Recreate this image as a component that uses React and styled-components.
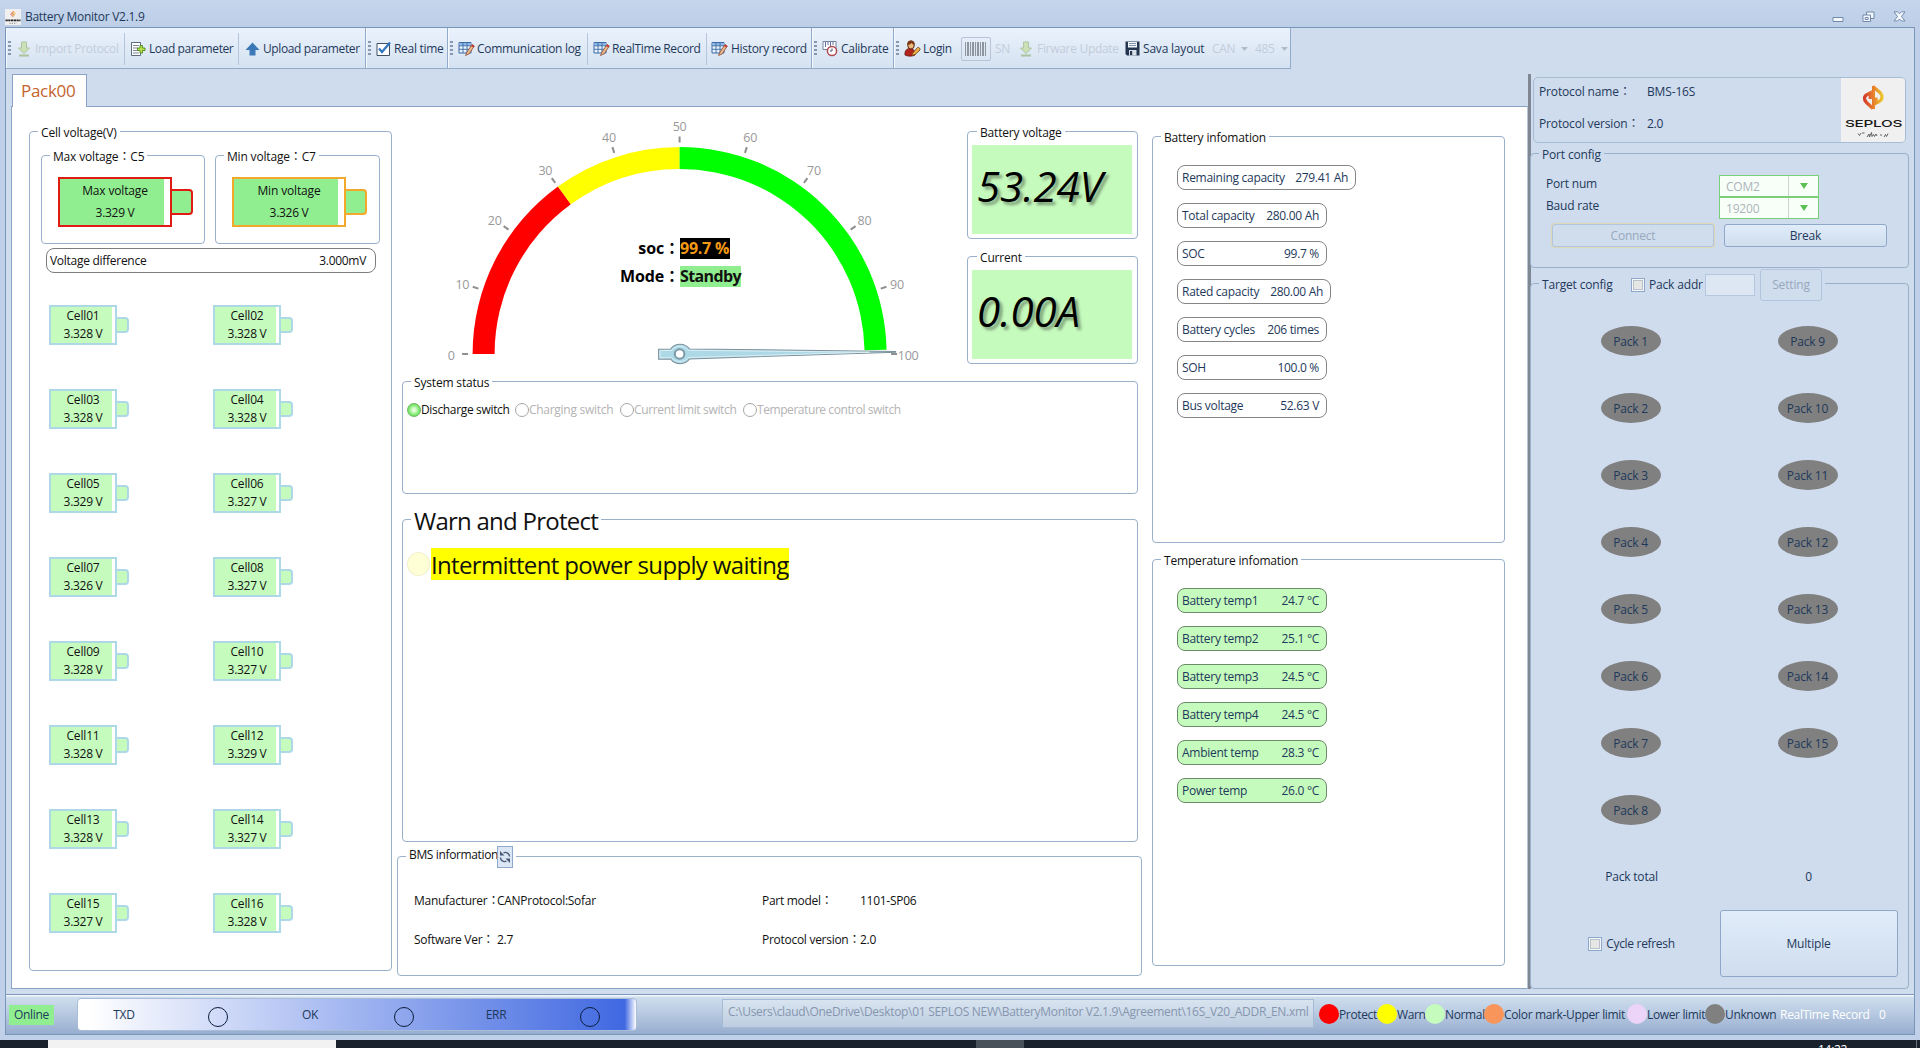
import React from 'react';
import styled, { createGlobalStyle } from 'styled-components';

const NAVY = '#1e395b';
const LINE = '#9ab0cb';
const PALE = '#c6fbbe';

const GlobalStyle = createGlobalStyle`
  *, *::before, *::after { box-sizing: border-box; }
  body {
    margin: 0;
    background: #fff;
    overflow: hidden;
    font-family: "Open Sans", "Noto Sans CJK TC", sans-serif;
    font-size: 12px;
    line-height: 16px;
    letter-spacing: -0.28px;
    color: #111;
    white-space: nowrap;
  }
`;

/* ---------- shell ---------- */

const Page = styled.div`
  width: 1926px;
  height: 1048px;
  display: flex;
  flex-direction: column;
  overflow: hidden;
  background: #fff;
`;

const Window = styled.div`
  width: 1920px;
  height: 1040px;
  display: flex;
  flex-direction: column;
  background: #bfd0e8;
  color: ${NAVY};
`;

const TitleBar = styled.header`
  height: 27px;
  flex: none;
  display: flex;
  align-items: center;
  padding: 6px 14px 0 5px;
  background: linear-gradient(#c4d5ec, #bdcfe7);
`;

const AppIcon = styled.svg`
  width: 16px;
  height: 16px;
  margin-right: 4px;
`;

const Title = styled.span`
  flex: 1;
`;

const WindowButtons = styled.div`
  display: flex;
  align-items: center;
  gap: 18px;
`;

const Body = styled.div`
  flex: 1;
  margin: 0 5px 5px;
  border: 1px solid #7a95ba;
  background: #cfdced;
  display: flex;
  flex-direction: column;
  min-height: 0;
`;

/* ---------- toolbar ---------- */

const ToolStrip = styled.nav`
  display: flex;
  height: 41px;
  flex: none;
`;

const ToolGroup = styled.div`
  width: ${(p) => p.$w}px;
  padding-top: 1px;
  display: flex;
  align-items: center;
  background: linear-gradient(#eaf2fc, #d5e2f1);
  border-right: 1px solid #93abcb;
  border-bottom: 1px solid #93abcb;
  box-shadow: inset 1px 0 0 #f5f9fe;
`;

const Grip = styled.span`
  width: 3px;
  height: 15px;
  margin: 0 ${(p) => p.$gap}px 0 2px;
  background: repeating-linear-gradient(#8797ad 0 2px, transparent 2px 4px);
`;

const Tool = styled.span`
  display: flex;
  align-items: center;
  width: ${(p) => p.$w}px;
  gap: ${(p) => p.$gap || 3}px;
  opacity: ${(p) => (p.$off ? 0.45 : 1)};
  color: ${(p) => (p.$off ? '#a0aab8' : NAVY)};
  letter-spacing: ${(p) => p.$ls || -0.3}px;
  svg { flex: none; }
`;

const ToolSep = styled.span`
  width: 1px;
  height: 32px;
  margin-right: ${(p) => p.$gap}px;
  background: #b4c5db;
`;

const BarcodeButton = styled.span`
  width: 30px;
  height: 24px;
  margin-right: 4px;
  display: flex;
  align-items: center;
  justify-content: center;
  border: 1px solid #b9c3d3;
  border-radius: 2px;
`;

const Bars = styled.span`
  width: 22px;
  height: 14px;
  background: repeating-linear-gradient(90deg, #8e959f 0 1px, transparent 1px 2px, #8e959f 2px 4px, transparent 4px 5px);
`;

/* ---------- main layout ---------- */

const Main = styled.main`
  flex: 1;
  display: flex;
  padding: 5px 0 5px 5px;
  min-height: 0;
`;

const Workspace = styled.section`
  width: 1517px;
  display: flex;
  flex-direction: column;
`;

const Tab = styled.div`
  width: 75px;
  height: 33px;
  margin: 0 0 -1px 1px;
  display: flex;
  align-items: center;
  padding-left: 8px;
  z-index: 1;
  border: 1px solid #8aa3c4;
  border-bottom: 0;
  background: #fff;
  color: #c4642d;
  font-size: 17px;
  letter-spacing: -0.3px;
`;

const TabPanel = styled.div`
  flex: 1;
  display: flex;
  align-items: flex-start;
  border: 1px solid #8aa3c4;
  border-right-color: #b9c6d8;
  background: #fff;
  color: #111;
`;

const Splitter = styled.div`
  width: 3px;
  background: #7f8792;
`;

const Group = styled.section`
  width: ${(p) => p.$w}px;
  height: ${(p) => p.$h}px;
  margin: ${(p) => p.$m || 0};
  padding: ${(p) => p.$p || 0};
  flex: none;
  display: flex;
  flex-direction: column;
  border: 1px solid ${LINE};
  border-radius: 4px;
`;

const Legend = styled.div`
  align-self: flex-start;
  flex: none;
  height: ${(p) => p.$h || 16}px;
  margin-top: calc(${(p) => (p.$h || 16) / -2}px + ${(p) => p.$dy ?? 1}px);
  margin-bottom: calc(${(p) => (p.$h || 16) / -2}px - ${(p) => p.$dy ?? 1}px);
  margin-left: ${(p) => p.$x || 8}px;
  padding: 0 3px;
  display: flex;
  align-items: center;
  background: ${(p) => p.$bg || '#fff'};
  font-size: ${(p) => p.$size || 12}px;
  letter-spacing: ${(p) => p.$ls || -0.17}px;
`;

/* ---------- cells ---------- */

const Extremes = styled.div`
  flex: none;
  display: flex;
  gap: 10px;
  padding: 23px 0 0 11px;
`;

const CellShape = styled.div`
  display: flex;
  align-items: center;
`;

const CellSlot = styled.div`
  padding: 21px 0 0 16px;
`;

const CellCase = styled.div`
  width: ${(p) => (p.$big ? 114 : 68)}px;
  height: ${(p) => (p.$big ? 50 : 40)}px;
  padding-right: ${(p) => (p.$big ? 6 : 3)}px;
  border: 2px solid ${(p) => p.$edge};
  background: #fff;
`;

const CellFill = styled.div`
  height: 100%;
  padding-left: ${(p) => (p.$big ? 6 : 3)}px;
  display: flex;
  flex-direction: column;
  align-items: center;
  justify-content: center;
  background: ${(p) => (p.$big ? '#90ee90' : PALE)};
  line-height: ${(p) => (p.$big ? 22.5 : 18)}px;
  letter-spacing: -0.15px;
`;

const Nub = styled.div`
  width: ${(p) => (p.$big ? 22 : 13)}px;
  height: ${(p) => (p.$big ? 26 : 16)}px;
  margin-left: -1px;
  border: 2px solid ${(p) => p.$edge};
  border-left-width: 1px;
  border-radius: 0 4px 4px 0;
  background: ${(p) => (p.$big ? '#90ee90' : PALE)};
`;

const Num = styled.span`
  letter-spacing: -0.3px;
`;

const Difference = styled.div`
  flex: none;
  width: 330px;
  height: 25px;
  margin: 4px 0 0 16px;
  padding: 0 9px 0 3px;
  display: flex;
  align-items: center;
  justify-content: space-between;
  border: 1px solid #7d7d7d;
  border-radius: 8px;
`;

const CellGrid = styled.div`
  display: grid;
  grid-template-columns: 164px 164px;
  grid-template-rows: repeat(7, 84px) 40px;
  padding: 32px 0 0 19px;
`;

const CellTile = styled.div`
  height: 40px;
`;

/* ---------- centre column ---------- */

const Centre = styled.div`
  width: 745px;
  margin-left: 5px;
  display: flex;
  flex-direction: column;
`;

const TopRow = styled.div`
  height: 274px;
  margin-left: 5px;
  display: flex;
`;

const GaugeBox = styled.div`
  position: relative;
  width: 565px;
  height: 274px;
`;

const GaugeText = styled.div`
  position: absolute;
  left: 178px;
  top: 131px;
  display: grid;
  grid-template-columns: 100px auto;
  grid-auto-rows: 21px;
  row-gap: 7px;
  line-height: 21px;
  font-size: 16px;
  font-weight: 700;
  letter-spacing: -0.1px;
  color: #000;
`;

const GaugeLabel = styled.span`
  text-align: right;
`;

const GaugeValue = styled.span`
  justify-self: start;
  width: ${(p) => p.$w}px;
  background: ${(p) => p.$bg};
  color: ${(p) => p.$fg};
  letter-spacing: ${(p) => p.$ls}px;
`;

const Readings = styled.div`
  display: flex;
  flex-direction: column;
  gap: 17px;
  padding-top: 24px;
`;

const LcdSlot = styled.div`
  padding-top: 13px;
`;

const Lcd = styled.div`
  height: 89px;
  padding-left: 5px;
  background: ${PALE};
  color: #000;
  font-size: 42px;
  font-style: italic;
  line-height: 82px;
  letter-spacing: -0.1px;
  text-shadow: 3px 3px 3px rgba(0, 0, 0, 0.38);
`;

const Switches = styled.div`
  display: flex;
  height: 20px;
  margin: 18px 0 0 4px;
`;

const Switch = styled.div`
  display: flex;
  align-items: center;
  width: ${(p) => p.$w}px;
  color: ${(p) => (p.$on ? '#111' : '#b3b3b3')};
  letter-spacing: ${(p) => p.$ls || -0.34}px;
`;

const Lamp = styled.span`
  width: 14px;
  height: 14px;
  flex: none;
  border-radius: 50%;
  border: 1px solid ${(p) => (p.$on ? '#6fb865' : '#a6a6a6')};
  background: ${(p) => (p.$on ? 'radial-gradient(#e2ffd9 0 15%, #5fe04f 75%)' : '#fff')};
`;

const Warning = styled.div`
  display: flex;
  height: 32px;
  margin: 28px 0 0 4px;
  align-items: flex-start;
`;

const WarnLamp = styled.span`
  width: 23px;
  height: 24px;
  margin: 4px 1px 0 0;
  border-radius: 50%;
  border: 1px solid #f1efcf;
  background: #ffffd6;
`;

const WarnText = styled.span`
  width: 358px;
  height: 32px;
  line-height: 34px;
  background: #ff0;
  font-size: 24px;
  letter-spacing: -0.65px;
`;

const RefreshButton = styled.span`
  width: 16px;
  height: 22px;
  display: flex;
  align-items: center;
  justify-content: center;
  border: 1px solid #8fa8c9;
  background: #dbe7f5;
`;

const LegendLabel = styled.span`
  width: 88px;
  padding-bottom: 4px;
`;

const InfoGrid = styled.div`
  display: grid;
  grid-template-columns: 83px 265px 98px auto;
  grid-auto-rows: 39px;
  align-items: center;
  padding: 24px 0 0 16px;
`;

/* ---------- info column ---------- */

const InfoColumn = styled.div`
  margin: 29px 0 0 10px;
  display: flex;
  flex-direction: column;
  gap: 16px;
`;

const PillList = styled.div`
  display: flex;
  flex-direction: column;
  align-items: flex-start;
  gap: 13px;
  padding: 28px 0 0 24px;
`;

const Pill = styled.div`
  width: ${(p) => p.$w || 150}px;
  height: 25px;
  padding: 0 7px 0 4px;
  display: flex;
  align-items: center;
  justify-content: space-between;
  border: 1px solid ${(p) => (p.$green ? '#6c8a69' : '#858585')};
  border-radius: 8px;
  background: ${(p) => (p.$green ? PALE : '#fff')};
  color: ${NAVY};
`;

/* ---------- side panel ---------- */

const Side = styled.aside`
  flex: 1;
  display: flex;
  flex-direction: column;
  color: ${NAVY};
  letter-spacing: -0.2px;
`;

const ProtocolCard = styled.div`
  width: 373px;
  height: 66px;
  margin: 3px 0 0 2px;
  display: flex;
  justify-content: space-between;
  border: 1px solid #a9bcd5;
  border-radius: 5px;
  overflow: hidden;
`;

const ProtocolRows = styled.div`
  display: grid;
  grid-template-columns: 108px auto;
  grid-auto-rows: 32px;
  align-items: center;
  padding-left: 5px;
  margin-top: -2px;
  letter-spacing: -0.15px;
`;

const PortRow = styled.div`
  height: 22px;
  display: flex;
`;

const PortLabel = styled.span`
  width: 188px;
  padding: 1px 0 0 15px;
`;

const Combo = styled.span`
  width: 100px;
  display: flex;
  border: 1px solid #7bcf76;
  background: #f8fff8;
  color: #acb3ba;
`;

const ComboText = styled.span`
  flex: 1;
  padding-left: 6px;
  line-height: 21px;
`;

const ComboArrow = styled.span`
  width: 30px;
  display: flex;
  align-items: center;
  justify-content: center;
  border-left: 1px solid #c9d5cf;
  &::after {
    content: "";
    border: 4px solid transparent;
    border-top: 6px solid #5cbf52;
    border-bottom: 0;
  }
`;

const PortButtons = styled.div`
  display: flex;
  gap: 10px;
  padding: 5px 0 0 21px;
`;

const Button = styled.span`
  width: ${(p) => p.$w}px;
  height: ${(p) => p.$h}px;
  display: flex;
  align-items: center;
  justify-content: center;
  border: 1px solid ${(p) => (p.$off ? '#b3c5de' : '#8fa8c9')};
  border-radius: 3px;
  background: ${(p) => (p.$off ? '#cfdded' : 'linear-gradient(#e0ecf9, #cfddee)')};
  color: ${(p) => (p.$off ? '#98a8bd' : NAVY)};
  box-shadow: ${(p) => (p.$glow ? '0 0 1px 1px #ddd8b4' : 'none')};
`;

const Check = styled.span`
  width: 14px;
  height: 14px;
  flex: none;
  margin-right: 4px;
  border: 1px solid #8fa8c9;
  background: #e6e6e4;
  box-shadow: inset 0 0 0 1px #f4f7fa, inset 0 0 0 2px #b9c2cc;
`;

const AddrLabel = styled.span`
  width: 52px;
`;

const AddrInput = styled.span`
  width: 50px;
  height: 22px;
  margin: 0 5px 0 4px;
  border: 1px solid #b5c6de;
  background: #dde6f3;
`;

const PackGrid = styled.div`
  display: grid;
  grid-template-columns: 177px 177px;
  grid-template-rows: repeat(8, 67px);
  grid-auto-flow: column;
  place-items: center;
  padding: 23px 0 0 11px;
`;

const PackBadge = styled.span`
  width: 60px;
  height: 30px;
  border-radius: 50%;
  background: #808080;
  text-align: center;
  line-height: 31px;
`;

const SideRow = styled.div`
  height: 67px;
  display: grid;
  grid-template-columns: 177px 177px;
  place-items: center;
  padding-left: 12px;
`;

const CheckLine = styled.span`
  display: flex;
  align-items: center;
  letter-spacing: -0.32px;
`;

const TargetTitle = styled.span`
  width: 89px;
`;

/* ---------- status bar ---------- */

const StatusBar = styled.footer`
  height: 40px;
  flex: none;
  display: flex;
  align-items: center;
  border-top: 1px solid #7f99bd;
  background: linear-gradient(#f0f6fb 0 1px, #cfdeed 2px, #b9cbe2 45%, #97adcf);
`;

const Online = styled.span`
  width: 45px;
  height: 20px;
  margin: 0 23px 0 3px;
  line-height: 20px;
  text-align: center;
  background: #90ee90;
`;

const Traffic = styled.div`
  width: 560px;
  height: 33px;
  display: grid;
  grid-template-columns: 92px 94px 92px 94px 92px 94px;
  align-items: center;
  border: 1px solid #a9bdd8;
  border-radius: 4px;
  background: linear-gradient(90deg, #fff 2%, #4169e1 97.5%, #4169e1 98%, #fff 100%);
  text-align: center;
`;

const Ring = styled.span`
  width: 20px;
  height: 20px;
  margin: 5px 0 0 38px;
  border: 1px solid #0b1d3c;
  border-radius: 50%;
`;

const PathBox = styled.div`
  width: 592px;
  height: 29px;
  margin: -2px 5px 0 85px;
  padding: 4px 0 0 5px;
  border: 1px solid #a6bad3;
  background: linear-gradient(#d8e4ef, #becde1);
  color: #8696ae;
  letter-spacing: -0.3px;
`;

const Key = styled.span`
  width: ${(p) => p.$w}px;
  display: flex;
  align-items: center;
  letter-spacing: -0.35px;
`;

const Dot = styled.span`
  width: 20px;
  height: 20px;
  flex: none;
  margin-top: -2px;
  border-radius: 50%;
  background: ${(p) => p.$c};
`;

const Counter = styled.span`
  width: ${(p) => p.$w}px;
  margin-left: 5px;
  color: #fff;
`;

const Taskbar = styled.div`
  width: 1920px;
  height: 8px;
  flex: none;
  display: flex;
  overflow: hidden;
  background: #18212c;
`;

const TaskItem = styled.span`
  width: ${(p) => p.$w}px;
  margin-left: ${(p) => p.$x}px;
  background: ${(p) => p.$c};
`;

const Clock = styled.span`
  width: 98px;
  margin-left: 794px;
  padding-top: 2px;
  color: #fff;
`;

const ShowDesktop = styled.span`
  border-left: 1px solid #6a727c;
`;

/* ---------- icons ---------- */

const DownloadIcon = () => (
  <svg width="12" height="16" viewBox="0 0 12 16">
    <path d="M3.5 1h5v6h3L6 12.5.5 7h3z" fill="#b3d46a" stroke="#6f9a35" />
    <path d="M1 14.5h10" stroke="#6f9a35" strokeWidth="2" />
  </svg>
);

const LoadIcon = () => (
  <svg width="15" height="16" viewBox="0 0 15 16">
    <path d="M.5 1.5h9v13h-9z" fill="#fff" stroke="#5d6b7c" />
    <path d="M2 4.5h6M2 7h5M2 9.5h5M2 12h6" stroke="#7b8796" />
    <path d="M9 4.5h2.5v2.5H14v2.5h-2.5V12H9V9.5H6.5V7H9z" fill="#b6e04c" stroke="#4d8a1c" strokeWidth=".9" />
  </svg>
);

const UpIcon = () => (
  <svg width="15" height="14" viewBox="0 0 15 14">
    <path d="M7.5.5 14.5 8H10.500v5.500h-6V8H.5z" fill="#3b78b8" />
  </svg>
);

const CheckIcon = () => (
  <svg width="15" height="16" viewBox="0 0 15 16">
    <path d="M1 2.5h12.500v12H1z" fill="#fff" stroke="#3e4f66" />
    <path d="M3 7.5 6 11 14 1.5" fill="none" stroke="#3276be" strokeWidth="2.3" />
  </svg>
);

const TableIcon = () => (
  <svg width="17" height="16" viewBox="0 0 17 16">
    <path d="M1 1.5h12v10.500H1z" fill="#e9f2fc" stroke="#3b6ba5" />
    <path d="M1.5 2h11v2.500h-11z" fill="#8db8e6" />
    <path d="M1 4.8h12M1 8.3h12M5 1.5V12M9 1.5V12" stroke="#3b6ba5" strokeWidth=".9" />
    <path d="M7.5 14.5 9 11l5-7.500 2.300 1.500-5 7.800z" fill="#e7b98b" stroke="#8e4a37" strokeWidth=".8" />
    <path d="m13 5 2.4 1.5L16.5 5 14.200 3.400z" fill="#c33a32" />
  </svg>
);

const CalibrateIcon = () => (
  <svg width="16" height="17" viewBox="0 0 16 17">
    <path d="M1 1.5h13v8H1z" fill="#fff" stroke="#7383a0" />
    <path d="M3.5 2v5M6 2v3M8.5 2v5M11 2v3" stroke="#65759a" />
    <circle cx="10" cy="11" r="4.6" fill="#fff" stroke="#b14a4e" strokeWidth="1.5" />
    <path d="M10 8.5V11H8" fill="none" stroke="#44506a" />
  </svg>
);

const LoginIcon = () => (
  <svg width="17" height="17" viewBox="0 0 17 17">
    <path d="M1 15c-.5-4 1.500-6.500 5-6.500s5.500 2.500 5 6.500c-2 1.500-8 1.500-10 0z" fill="#b3241d" stroke="#5f140f" strokeWidth=".8" />
    <ellipse cx="7" cy="5" rx="3.3" ry="4" fill="#eab97c" stroke="#5d2b12" />
    <path d="M3.5 5C3 1.5 5 .4 7.500.6S11 3 10.400 5C9 4.500 8 3.500 7.500 3 6.500 4 5 5 3.500 5z" fill="#7a3512" />
    <path d="m8 14 5.500-6.500c1.500-.5 2.800.8 2.500 2.500l-5 4.500-2.500.8z" fill="#f0b24a" stroke="#7b4713" strokeWidth=".9" />
  </svg>
);

const SaveIcon = () => (
  <svg width="15" height="15" viewBox="0 0 15 15">
    <path d="M.5.5h14v14H2l-1.500-1.500z" fill="#24364f" />
    <path d="M3 1h9v5.500H3z" fill="#f3f7fb" />
    <path d="M4 2.5h7M4 4.5h7" stroke="#7f93ad" />
    <path d="M4 9h7.500v5.500H4z" fill="#d7e0ea" />
    <path d="M5 10h2.200v4H5z" fill="#24364f" />
  </svg>
);

const Caret = () => (
  <svg width="7" height="4" viewBox="0 0 7 4">
    <path d="M0 0h7L3.500 4z" fill="#7d8794" />
  </svg>
);

const RefreshIcon = () => (
  <svg width="12" height="14" viewBox="0 0 12 14" fill="none" stroke="#4a5a74" strokeWidth="1.4">
    <path d="M1.5 7.500c0 3 3 5 6 3.700M10.500 6.500c0-3-3-5-6-3.700" />
    <path d="M6.5 8.500h4.500V13zM5.500 5.500H1V1z" fill="#4a5a74" stroke="none" />
  </svg>
);

const BrandMark = ({ id }) => (
  <g fill="none" stroke={`url(#${id})`}>
    <linearGradient id={id} gradientUnits="userSpaceOnUse" x1="22" y1="0" x2="43" y2="0">
      <stop offset="0" stopColor="#cf3328" />
      <stop offset=".5" stopColor="#e8802c" />
      <stop offset="1" stopColor="#ecd32e" />
    </linearGradient>
    <path d="M32.5 8v23" strokeWidth="3" />
    <path d="M31.8 8.500 39.500 15c2.500 3 2 7-1.500 8.500l-3 1.500v-5.500" strokeWidth="3.300" />
    <path d="M32 30.500 25.500 24.500c-3-3-2.500-6.500.8-8l3-1.500v6" strokeWidth="3.300" />
  </g>
);

const Brand = () => (
  <svg width="64" height="64" viewBox="0 0 64 64">
    <path d="M0 0h64v64H0z" fill="#f0f0f0" />
    <BrandMark id="brandLarge" />
    <text x="4" y="49" textLength="57" lengthAdjust="spacingAndGlyphs" fontFamily="Inter, sans-serif" fontSize="9.5" fontWeight="500" fill="#1a1a1a">SEPLOS</text>
    <path d="M17 55.500l1.500 2 1.500-2.500M21 55h2.500M26 59l2-3 .5 3 2-4.500 .5 4 1.500-2 1 2 1.500-2.500 1 2M39 57h2M43 59l1.500-2.500 1 2 1.500-3" fill="none" stroke="#555" strokeWidth=".9" />
  </svg>
);

const MinimizeIcon = () => (
  <svg width="12" height="12" viewBox="0 0 12 12">
    <path d="M1 6.5h10v4H1z" fill="#f4f8fc" stroke="#7089ab" />
  </svg>
);

const RestoreIcon = () => (
  <svg width="13" height="12" viewBox="0 0 13 12" fill="#f4f8fc" stroke="#7089ab">
    <path d="M4.5 1h7.500v6.500H4.500z" />
    <path d="M1 4h7.500v6.500H1z" />
    <path d="M3.2 6.5h3v2h-3z" />
  </svg>
);

const CloseIcon = () => (
  <svg width="13" height="11" viewBox="0 0 13 11">
    <path d="M1 .8h3.500l2 2 2-2H12L8.500 5.500 12 10H8.500l-2-2-2 2H1l3.500-4.500z" fill="#f4f8fc" stroke="#7089ab" />
  </svg>
);

/* ---------- gauge ---------- */

const CX = 277.6;
const CY = 247;

const polar = (radius, value) => {
  const a = Math.PI * (1 - value / 100);
  return [CX + radius * Math.cos(a), CY - radius * Math.sin(a)];
};

const band = (from, to) => {
  const p = [polar(207, from), polar(207, to), polar(185, to), polar(185, from)].map((q) => q.join(' '));
  return `M${p[0]}A207 207 0 0 1 ${p[1]}L${p[2]}A185 185 0 0 0 ${p[3]}z`;
};

const TICKS = [0, 10, 20, 30, 40, 50, 60, 70, 80, 90, 100];

const Gauge = () => (
  <GaugeBox>
    <svg width="565" height="274" viewBox="0 0 565 274">
      <path d={band(0, 30)} fill="#f00" />
      <path d={band(30, 50)} fill="#ff0" />
      <path d={band(50, 99.35)} fill="#0f0" />
      {TICKS.map((t) => {
        const [x1, y1] = polar(211.5, t);
        const [x2, y2] = polar(217.5, t);
        const [tx, ty] = polar(228.5, t);
        return (
          <g key={t}>
            <path d={`M${x1} ${y1}L${x2} ${y2}`} stroke="#8f8f8f" strokeWidth="2" />
            <text x={tx} y={ty + 5.5} textAnchor="middle" fontSize="12.5" fill="#999">{t}</text>
          </g>
        );
      })}
      <g transform={`rotate(-0.54 ${CX} ${CY})`}>
        <path
          d={`M${CX - 21} ${CY - 5}h12a12 12 0 0 1 19 0L${CX + 216} ${CY - 0.4}v.8L${CX + 10} ${CY + 5}a12 12 0 0 1 -19 0h-12z`}
          fill="#add8e6"
          stroke="#7d919c"
          strokeWidth="1"
        />
        <path
          d={`M${CX - 19.5} ${CY - 3.6}h11.500a10.500 10.500 0 0 1 16.500 0L${CX + 190} ${CY}L${CX + 8.5} ${CY + 3.6}a10.500 10.500 0 0 1 -16.500 0h-11.500z`}
          fill="none"
          stroke="#e3f3f8"
          strokeWidth=".8"
        />
      </g>
      <circle cx={CX} cy={CY} r="4.8" fill="#fff" stroke="#7c98a6" strokeWidth="2" />
    </svg>
    <GaugeText>
      <GaugeLabel>soc：</GaugeLabel>
      <GaugeValue $w={50} $bg="#000" $fg="#f59a14" $ls={-0.25}>99.7 %</GaugeValue>
      <GaugeLabel>Mode：</GaugeLabel>
      <GaugeValue $w={61} $bg="#90ee90" $fg="#111" $ls={-0.6}>Standby</GaugeValue>
    </GaugeText>
  </GaugeBox>
);

/* ---------- composed parts ---------- */

const Cell = ({ name, value, edge = '#add8e6', big }) => (
  <CellShape>
    <CellCase $big={big} $edge={edge}>
      <CellFill $big={big}>
        <span>{name}</span>
        <Num>{value} V</Num>
      </CellFill>
    </CellCase>
    <Nub $big={big} $edge={edge} />
  </CellShape>
);

const CELLS = ['3.328', '3.328', '3.328', '3.328', '3.329', '3.327', '3.326', '3.327', '3.328', '3.327', '3.328', '3.329', '3.328', '3.327', '3.327', '3.328'];

const BATTERY = [
  ['Remaining capacity', '279.41 Ah', 179],
  ['Total capacity', '280.00 Ah'],
  ['SOC', '99.7 %'],
  ['Rated capacity', '280.00 Ah', 154],
  ['Battery cycles', '206 times'],
  ['SOH', '100.0 %'],
  ['Bus voltage', '52.63 V'],
];

const TEMPS = [
  ['Battery temp1', '24.7 °C'],
  ['Battery temp2', '25.1 °C'],
  ['Battery temp3', '24.5 °C'],
  ['Battery temp4', '24.5 °C'],
  ['Ambient temp', '28.3 °C'],
  ['Power temp', '26.0 °C'],
];

const KEYS = [
  ['Protect', '#f00', 58],
  ['Warn', '#ff0', 48],
  ['Normal', PALE, 59],
  ['Color mark-Upper limit', '#f7955a', 143],
  ['Lower limit', '#ecd3f8', 78],
  ['Unknown', '#808080', 70],
];

const PACKS = Array.from({ length: 15 }, (_, i) => `Pack ${i + 1}`);

const Toolbar = () => (
  <ToolStrip>
    <ToolGroup $w={360}>
      <Grip $gap={7} />
      <Tool $w={106} $gap={5} $off><DownloadIcon />Import Protocol</Tool>
      <ToolSep $gap={6} />
      <Tool $w={107} $ls={-0.4}><LoadIcon />Load parameter</Tool>
      <ToolSep $gap={6} />
      <Tool $w={110} $ls={-0.38}><UpIcon />Upload parameter</Tool>
    </ToolGroup>
    <ToolGroup $w={82}>
      <Grip $gap={5} />
      <Tool $w={68}><CheckIcon />Real time</Tool>
    </ToolGroup>
    <ToolGroup $w={364}>
      <Grip $gap={5} />
      <Tool $w={129} $gap={2}><TableIcon />Communication log</Tool>
      <ToolSep $gap={5} />
      <Tool $w={113} $gap={2} $ls={-0.35}><TableIcon />RealTime Record</Tool>
      <ToolSep $gap={4} />
      <Tool $w={98}><TableIcon />History record</Tool>
    </ToolGroup>
    <ToolGroup $w={82}>
      <Grip $gap={5} />
      <Tool $w={68}><CalibrateIcon />Calibrate</Tool>
    </ToolGroup>
    <ToolGroup $w={397}>
      <Grip $gap={5} />
      <Tool $w={57} $gap={2}><LoginIcon />Login</Tool>
      <BarcodeButton><Bars /></BarcodeButton>
      <Tool $w={25} $off>SN</Tool>
      <Tool $w={105} $gap={5} $off><DownloadIcon />Firware Update</Tool>
      <Tool $w={87} $ls={-0.2}><SaveIcon />Sava layout</Tool>
      <Tool $w={43} $gap={6} $off>CAN<Caret /></Tool>
      <Tool $w={34} $gap={6} $off>485<Caret /></Tool>
    </ToolGroup>
  </ToolStrip>
);

const CellPanel = () => (
  <Group $w={363} $h={840} $m="24px 0 0 17px">
    <Legend>Cell voltage(V)</Legend>
    <Extremes>
      <Group $w={164} $h={89}>
        <Legend>Max voltage：C5</Legend>
        <CellSlot><Cell big name="Max voltage" value="3.329" edge="#e01b14" /></CellSlot>
      </Group>
      <Group $w={165} $h={89}>
        <Legend>Min voltage：C7</Legend>
        <CellSlot><Cell big name="Min voltage" value="3.326" edge="#f2a82a" /></CellSlot>
      </Group>
    </Extremes>
    <Difference><span>Voltage difference</span><Num>3.000mV</Num></Difference>
    <CellGrid>
      {CELLS.map((v, i) => (
        <CellTile key={i}>
          <Cell name={`Cell${String(i + 1).padStart(2, '0')}`} value={v} />
        </CellTile>
      ))}
    </CellGrid>
  </Group>
);

const Reading = ({ title, value }) => (
  <Group $w={171} $h={108} $p="0 5px 4px 4px">
    <Legend $x={5}>{title}</Legend>
    <LcdSlot><Lcd>{value}</Lcd></LcdSlot>
  </Group>
);

const PillPanel = ({ title, rows, green }) => (
  <Group $w={353} $h={407}>
    <Legend>{title}</Legend>
    <PillList>
      {rows.map(([name, value, w]) => (
        <Pill key={name} $w={w} $green={green}><span>{name}</span><Num>{value}</Num></Pill>
      ))}
    </PillList>
  </Group>
);

const PortLegend = styled(Legend).attrs({ $bg: '#cfdced' })`
  margin-top: -28px;
  margin-bottom: 12px;
`;

const SidePanel = () => (
  <Side>
    <ProtocolCard>
      <ProtocolRows>
        <span>Protocol name：</span><span>BMS-16S</span>
        <span>Protocol version：</span><Num>2.0</Num>
      </ProtocolRows>
      <Brand />
    </ProtocolCard>
    <Group $w={379} $h={115} $m="10px 0 0 -1px" $p="21px 0 0">
      <PortLegend>Port config</PortLegend>
      <PortRow><PortLabel>Port num</PortLabel><Combo><ComboText>COM2</ComboText><ComboArrow /></Combo></PortRow>
      <PortRow><PortLabel>Baud rate</PortLabel><Combo><ComboText>19200</ComboText><ComboArrow /></Combo></PortRow>
      <PortButtons>
        <Button $w={162} $h={23} $off $glow>Connect</Button>
        <Button $w={163} $h={23}>Break</Button>
      </PortButtons>
    </Group>
    <Group $w={379} $h={706} $m="15px 0 0 -1px">
      <Legend $h={32} $bg="#cfdced">
        <TargetTitle>Target config</TargetTitle>
        <Check /><AddrLabel>Pack addr</AddrLabel><AddrInput />
        <Button $w={62} $h={32} $off>Setting</Button>
      </Legend>
      <PackGrid>{PACKS.map((p) => <PackBadge key={p}>{p}</PackBadge>)}</PackGrid>
      <SideRow><span>Pack total</span><span>0</span></SideRow>
      <SideRow>
        <CheckLine><Check />Cycle refresh</CheckLine>
        <Button $w={178} $h={67}>Multiple</Button>
      </SideRow>
    </Group>
  </Side>
);

export default function App() {
  return (
    <Page>
      <GlobalStyle />
      <Window>
        <TitleBar>
          <AppIcon viewBox="0 0 64 64">
            <path d="M0 0h64v64H0z" fill="#f0f0f0" />
            <BrandMark id="brandSmall" />
            <path d="M2 45h60" stroke="#222" strokeWidth="7" strokeDasharray="9 2" />
            <path d="M18 57h28" stroke="#888" strokeWidth="4" strokeDasharray="5 4" />
          </AppIcon>
          <Title>Battery Monitor V2.1.9</Title>
          <WindowButtons><MinimizeIcon /><RestoreIcon /><CloseIcon /></WindowButtons>
        </TitleBar>
        <Body>
          <Toolbar />
          <Main>
            <Workspace>
              <Tab>Pack00</Tab>
              <TabPanel>
                <CellPanel />
                <Centre>
                  <TopRow>
                    <Gauge />
                    <Readings>
                      <Reading title="Battery voltage" value="53.24V" />
                      <Reading title="Current" value="0.00A" />
                    </Readings>
                  </TopRow>
                  <Group $w={736} $h={113} $m="0 0 0 5px">
                    <Legend>System status</Legend>
                    <Switches>
                      <Switch $w={108} $on><Lamp $on />Discharge switch</Switch>
                      <Switch $w={105} $ls={-0.28}><Lamp />Charging switch</Switch>
                      <Switch $w={123}><Lamp />Current limit switch</Switch>
                      <Switch $w={160} $ls={-0.43}><Lamp />Temperature control switch</Switch>
                    </Switches>
                  </Group>
                  <Group $w={736} $h={323} $m="25px 0 0 5px">
                    <Legend $h={30} $size={24} $ls={-0.75}>Warn and Protect</Legend>
                    <Warning><WarnLamp /><WarnText>Intermittent power supply waiting</WarnText></Warning>
                  </Group>
                  <Group $w={745} $h={120} $m="14px 0 0 0">
                    <Legend $h={22} $dy={0} $ls={-0.36}>
                      <LegendLabel>BMS information</LegendLabel>
                      <RefreshButton><RefreshIcon /></RefreshButton>
                    </Legend>
                    <InfoGrid>
                      <span>Manufacturer：</span><span>CANProtocol:Sofar</span>
                      <span>Part model：</span><span>1101-SP06</span>
                      <span>Software Ver：</span><Num>2.7</Num>
                      <span>Protocol version：</span><Num>2.0</Num>
                    </InfoGrid>
                  </Group>
                </Centre>
                <InfoColumn>
                  <PillPanel title="Battery infomation" rows={BATTERY} />
                  <PillPanel title="Temperature infomation" rows={TEMPS} green />
                </InfoColumn>
              </TabPanel>
            </Workspace>
            <Splitter />
            <SidePanel />
          </Main>
          <StatusBar>
            <Online>Online</Online>
            <Traffic>
              <span>TXD</span><Ring />
              <span>OK</span><Ring />
              <span>ERR</span><Ring />
            </Traffic>
            <PathBox>C:\Users\claud\OneDrive\Desktop\01 SEPLOS NEW\BatteryMonitor V2.1.9\Agreement\16S_V20_ADDR_EN.xml</PathBox>
            {KEYS.map(([name, c, w]) => <Key key={name} $w={w}><Dot $c={c} />{name}</Key>)}
            <Counter $w={94}>RealTime Record</Counter>
            <Counter $w={20}>0</Counter>
          </StatusBar>
        </Body>
      </Window>
      <Taskbar>
        <TaskItem $x={48} $w={288} $c="#f2f2f2" />
        <TaskItem $x={640} $w={48} $c="#485059" />
        <Clock>14:22</Clock>
        <ShowDesktop />
      </Taskbar>
    </Page>
  );
}
